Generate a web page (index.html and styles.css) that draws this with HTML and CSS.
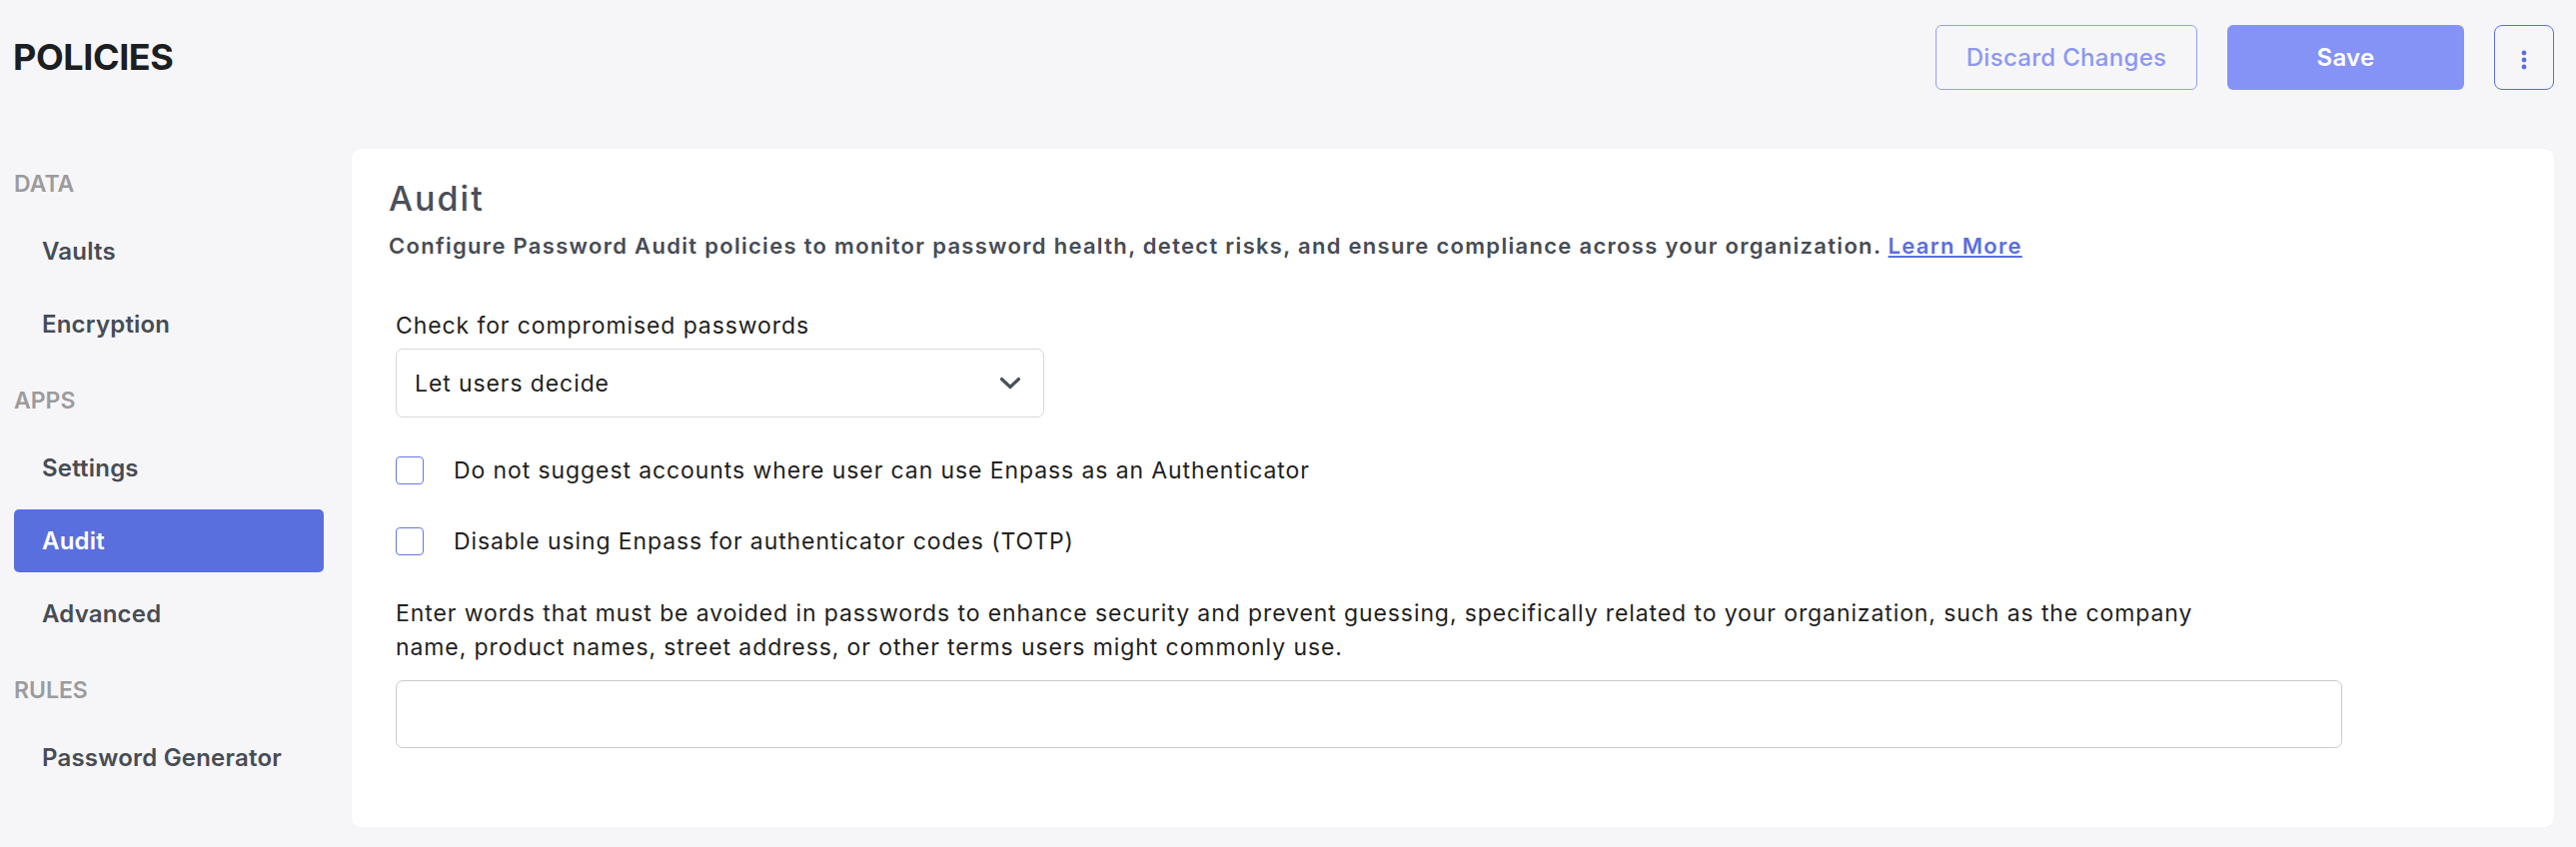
FILE: index.html
```html
<!DOCTYPE html>
<html>
<head>
    <title>Policies - Audit</title>
    <link rel="stylesheet" href="styles.css">
</head>
<body>
    <header class="topbar">
        <h1>POLICIES</h1>
        <div class="actions">
            <button class="btn btn-outline">Discard Changes</button>
            <button class="btn btn-primary">Save</button>
            <button class="btn btn-more" aria-label="More options">
                <svg width="6" height="20" viewBox="0 0 6 20">
                    <circle cx="3" cy="3" r="2.4"/>
                    <circle cx="3" cy="10" r="2.4"/>
                    <circle cx="3" cy="17" r="2.4"/>
                </svg>
            </button>
        </div>
    </header>

    <div class="layout">
        <nav class="sidebar">
            <div class="nav-section">DATA</div>
            <a class="nav-item" href="#">Vaults</a>
            <a class="nav-item" href="#">Encryption</a>
            <div class="nav-section">APPS</div>
            <a class="nav-item" href="#">Settings</a>
            <a class="nav-item active" href="#">Audit</a>
            <a class="nav-item" href="#">Advanced</a>
            <div class="nav-section">RULES</div>
            <a class="nav-item" href="#">Password Generator</a>
        </nav>

        <main class="card">
            <h2>Audit</h2>
            <p class="lead">Configure Password Audit policies to monitor password health, detect risks, and ensure compliance across your organization. <a href="#">Learn More</a></p>

            <div class="form">
                <label class="field-label">Check for compromised passwords</label>
                <div class="select">
                    <span>Let users decide</span>
                    <svg width="22" height="13" viewBox="0 0 22 13">
                        <path d="M2.5 2.5 L11 10.5 L19.5 2.5" fill="none" stroke="#4a4f58" stroke-width="3.2" stroke-linecap="round" stroke-linejoin="round"/>
                    </svg>
                </div>

                <label class="check"><span class="box"></span>Do not suggest accounts where user can use Enpass as an Authenticator</label>
                <label class="check"><span class="box"></span>Disable using Enpass for authenticator codes (TOTP)</label>

                <p class="hint">Enter words that must be avoided in passwords to enhance security and prevent guessing, specifically related to your organization, such as the company name, product names, street address, or other terms users might commonly use.</p>
                <input class="text-input" type="text">
            </div>
        </main>
    </div>
</body>
</html>
```

FILE: styles.css
```css
body {
    margin: 0;
    background: #f6f6f9;
    font-family: Inter, "Open Sans", sans-serif;
    color: #1f1f22;
}

/* верхняя панель */
.topbar {
    display: flex;
    justify-content: space-between;
    align-items: center;
    height: 65px;
    padding: 25px 22px 0 13px;
}

.topbar h1 {
    margin: 0;
    font-size: 36px;
    font-weight: 700;
    letter-spacing: -0.4px;
    line-height: 65px;
    color: #1d1e22;
}

.actions {
    display: flex;
    gap: 30px;
}

.btn {
    height: 65px;
    border-radius: 6px;
    font-family: inherit;
    font-size: 24px;
    letter-spacing: 0.3px;
    cursor: pointer;
}

.btn-outline {
    width: 262px;
    background: transparent;
    border: 1.5px solid #929ef4;
    color: #8c98f2;
    font-weight: 500;
}

.btn-primary {
    width: 237px;
    background: #8593f6;
    border: none;
    color: white;
    font-weight: 600;
}

.btn-more {
    width: 60px;
    background: transparent;
    border: 1.5px solid #5a6fde;
    border-radius: 8px;
    display: flex;
    align-items: center;
    justify-content: center;
    padding-top: 5px;
    fill: #5a6fde;
}

/* сайдбар + карточка */
.layout {
    display: flex;
    gap: 28px;
    margin-top: 59px;
    padding: 0 22px 0 14px;
}

.sidebar {
    flex: 0 0 310px;
    display: flex;
    flex-direction: column;
}

.nav-section {
    padding: 20px 0;
    line-height: 31px;
    font-size: 23px;
    font-weight: 600;
    color: #9b9b9d;
}

.nav-item {
    height: 63px;
    line-height: 63px;
    margin-bottom: 10px;
    padding-left: 28px;
    border-radius: 5px;
    font-size: 24px;
    font-weight: 600;
    letter-spacing: 0.2px;
    color: #474c55;
    text-decoration: none;
}

.nav-item.active {
    background: #5a6fde;
    color: white;
}

.card {
    flex: 1;
    background: white;
    border-radius: 9px;
    padding: 30px 37px 79px;
    box-shadow: 0 0 3px rgba(0, 0, 0, 0.03);
}

.card h2 {
    margin: 0;
    font-size: 34px;
    font-weight: 500;
    letter-spacing: 2px;
    line-height: 40px;
    color: #4a4f58;
}

.lead {
    margin: 12px 0 0;
    font-size: 22px;
    font-weight: 600;
    letter-spacing: 1.3px;
    line-height: 30px;
    color: #474c55;
}

.lead a {
    color: #5a6fde;
}

.form {
    margin-left: 7px;
    font-size: 23px;
    letter-spacing: 0.9px;
}

.field-label {
    display: block;
    margin-top: 49px;
    line-height: 32px;
}

.select {
    display: flex;
    justify-content: space-between;
    align-items: center;
    box-sizing: border-box;
    width: 649px;
    height: 69px;
    margin-top: 7px;
    padding: 0 22px 0 18px;
    border: 1.5px solid #d6d8db;
    border-radius: 7px;
}

.check {
    display: flex;
    align-items: center;
    gap: 30px;
    line-height: 28px;
    margin-top: 39px;
}

.check + .check {
    margin-top: 43px;
}

.box {
    box-sizing: border-box;
    width: 28px;
    height: 28px;
    border: 1.5px solid #6476e6;
    border-radius: 4px;
}

.hint {
    max-width: 1830px;
    margin: 41px 0 0;
    line-height: 34px;
}

.text-input {
    display: block;
    box-sizing: border-box;
    width: 1948px;
    height: 68px;
    margin-top: 16px;
    border: 1.5px solid #c8cbcf;
    border-radius: 7px;
    font: inherit;
}
```
